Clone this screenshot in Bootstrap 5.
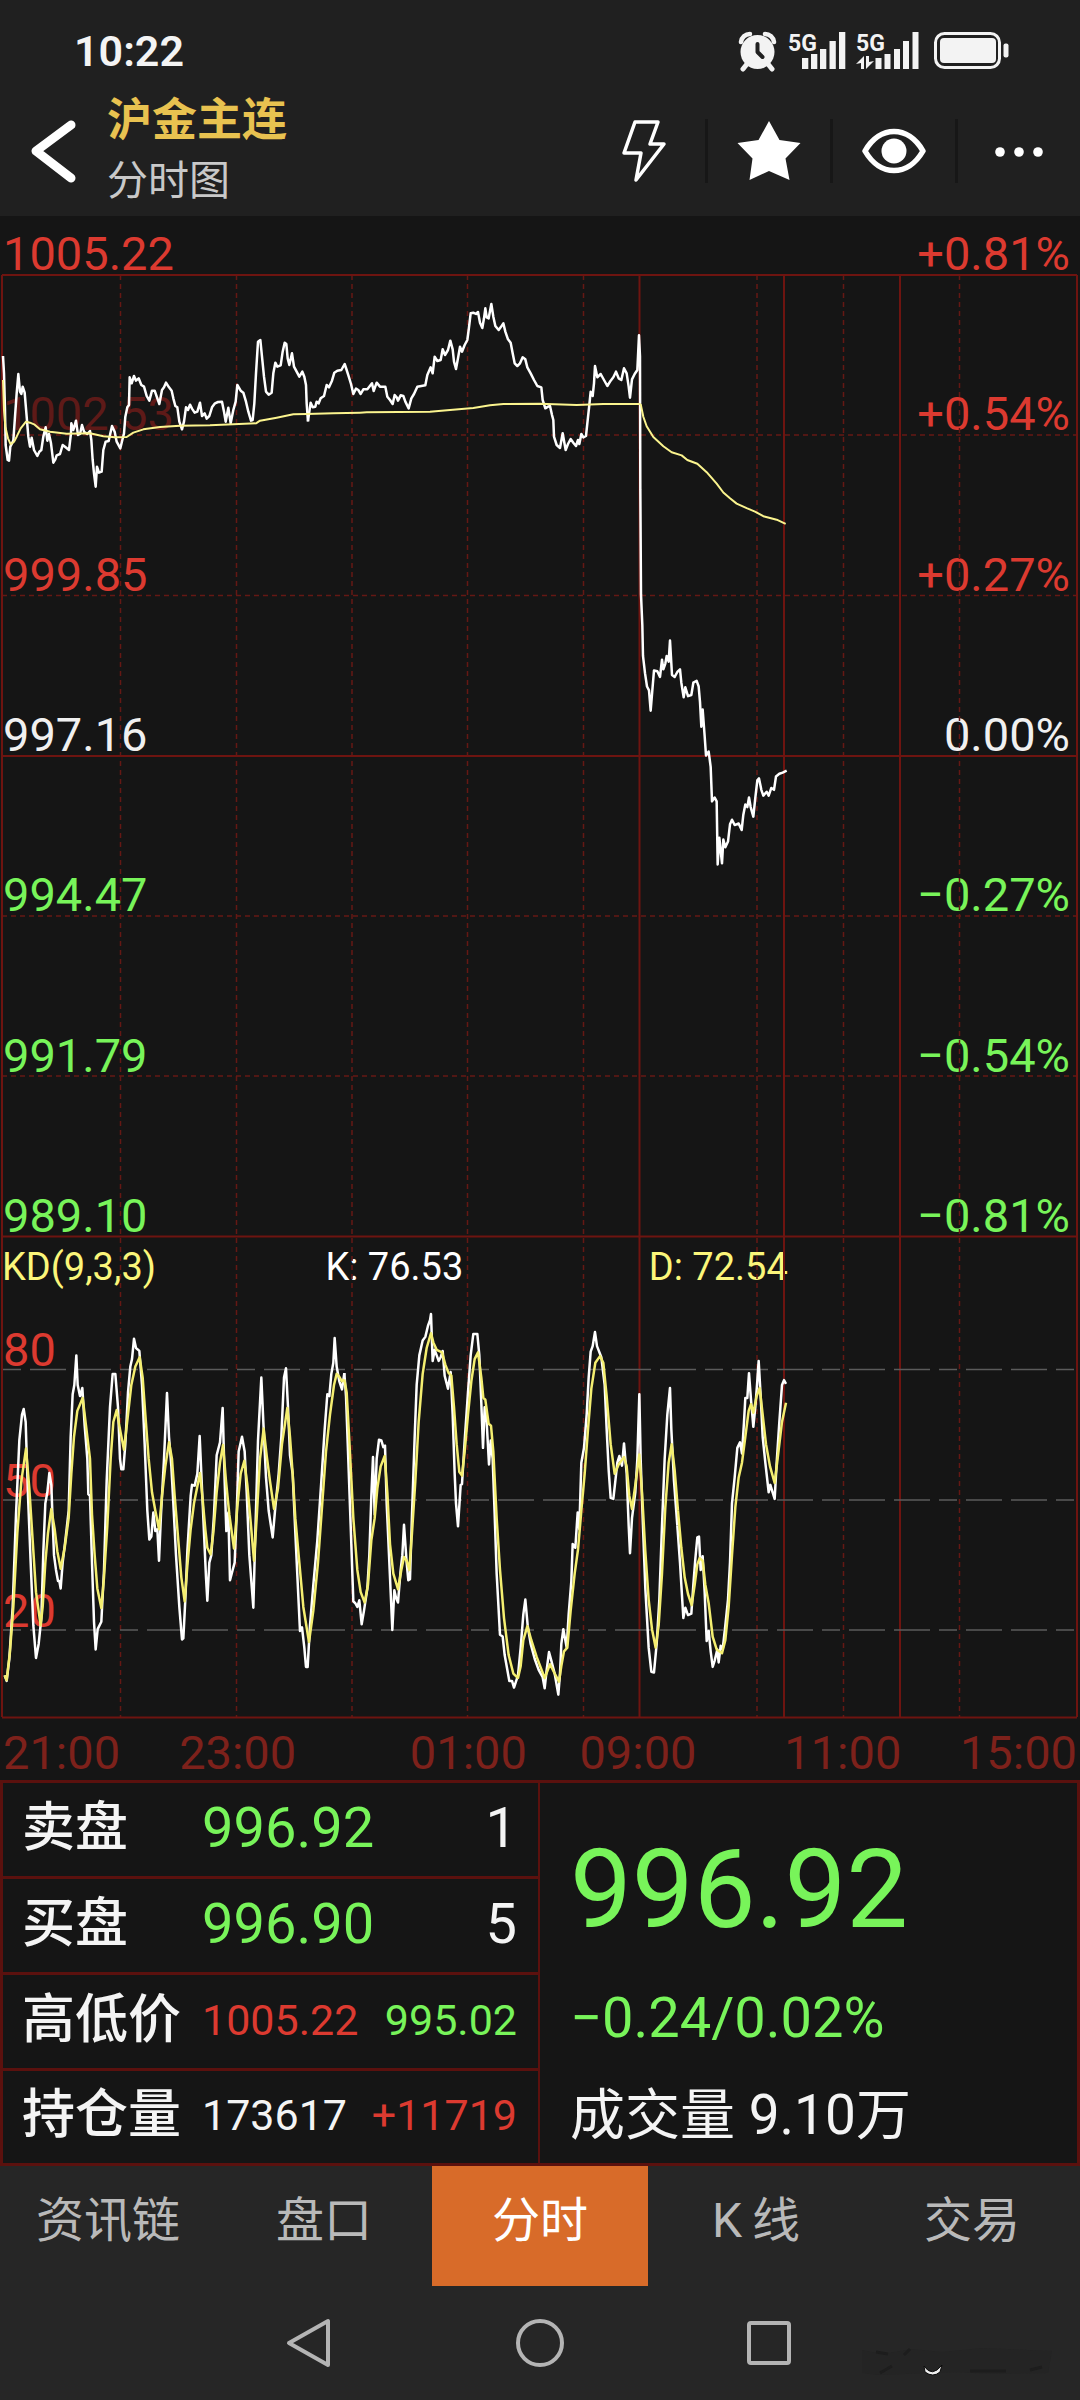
<!DOCTYPE html>
<html lang="zh-CN">
<head>
<meta charset="utf-8">
<meta name="viewport" content="width=device-width, initial-scale=1">
<title>沪金主连 分时图</title>
<link href="https://cdn.jsdelivr.net/npm/bootstrap@5.3.0/dist/css/bootstrap.min.css" rel="stylesheet">
<style>
  body { font-family: Roboto, "Noto Sans CJK SC", sans-serif; background: #262626; color: #f4f4f4; }
  .up { color: #dc3a30; }
  .down { color: #78f45a; }
  .flat { color: #f0f0f0; }
  .top-area { background: #202020; }
  .status-row { height: 86px; padding: 27px 70px 11px 74px; }
  .clock { font-size: 43px; line-height: 48px; font-weight: 600; }
  .app-row { height: 130px; }
  .back-btn { width: 107px; height: 96px; }
  .title-main { font-size: 45px; line-height: 60px; font-weight: 700; color: #e8c250; }
  .title-sub { font-size: 41px; line-height: 60px; color: #c9c9c9; }
  .tool-btn { width: 125px; height: 64px; border-radius: 0; border: 0; border-left: 3px solid #171717; }
  .tool-btn:first-child { border-left-color: transparent; }
  .chart-area { background: #151515; }
  .plot { pointer-events: none; }
  .price-axis { height: 1025px; padding: 14px 10px 1px 3px; }
  .axis-label { font-size: 47px; line-height: 48px; }
  .faded { color: #5e1a18; }
  .kd-head { font-size: 38px; line-height: 53px; height: 51px; padding-left: 2px; }
  .kd-head span { width: 30%; }
  .sun { color: #fbf67a; }
  .kd-axis { height: 426px; padding: 34px 0 83px 3px; }
  .time-axis { display: grid; grid-template-columns: 121fr 230fr 234fr 107fr 305fr 83fr; height: 62px; padding: 11px 3px 0; color: #7d211b; }
  .time-axis div { min-width: 0; display: flex; justify-content: center; }
  .time-axis div:first-child { justify-content: flex-start; }
  .time-axis div:last-child { justify-content: flex-end; }
  .quote { background: #151515; border: 3px solid #5b110e; }
  .quote-left { border-right: 2px solid #5b110e; }
  .quote-row { height: 96px; padding: 0 21px 4px 19px; border-bottom: 3px solid #5b110e; }
  .quote-row:last-child { border-bottom: 0; height: 92px; }
  .quote-name { width: 180px; font-size: 53px; line-height: 60px; font-weight: 500; }
  .num-lg { font-size: 56px; line-height: 60px; }
  .num-sm { font-size: 43px; line-height: 60px; }
  .quote-right { padding: 41px 30px 18px; }
  .last-price { font-size: 110px; line-height: 132px; }
  .change { font-size: 56px; line-height: 60px; margin-bottom: 37px; }
  .volume { font-size: 55px; line-height: 60px; }
  .tabs .nav-link { height: 120px; border-radius: 0; padding: 0 0 10px; font-size: 48px; color: #b9b9b9; display: flex; align-items: center; justify-content: center; }
  .tabs .nav-link.active { background: #d86b29; color: #fff; }
  .sys-nav { height: 114px; }
  .sys-nav .btn { width: 60px; height: 60px; }
  .sys-nav .keys { gap: 170px; }
  .smudge { right: 10px; bottom: 16px; }
</style>
<script src="https://cdn.jsdelivr.net/npm/bootstrap@5.3.0/dist/js/bootstrap.bundle.min.js"></script>
</head>
<body>
<header class="top-area">
  <div class="status-row d-flex justify-content-between align-items-center">
    <div class="clock">10:22</div>
    <svg width="274" height="42" viewBox="736 30 274 42" fill="#f3f3f3" aria-hidden="true">
      <!-- alarm -->
      <circle cx="757.500" cy="52" r="17"/>
      <path d="M741 42a9 9 0 0 1 9-8M774 42a9 9 0 0 0-9-8" fill="none" stroke="#f3f3f3" stroke-width="4.500" stroke-linecap="round"/>
      <path d="M747 64l-4 5M768 64l4 5" stroke="#f3f3f3" stroke-width="5" stroke-linecap="round"/>
      <path d="M757.500 44v8l5 5" fill="none" stroke="#202020" stroke-width="4" stroke-linecap="round" stroke-linejoin="round"/>
      <!-- signals -->
      <text x="788" y="51" font-size="23" font-weight="700" font-family="Roboto, sans-serif">5G</text>
      <path d="M802 58h6.300v11h-6.300zM811 54h6.300v15h-6.300zM820 49h6.300v20h-6.300zM829.500 41h6.300v28h-6.300zM839 32h6.300v37h-6.300z"/>
      <text x="856" y="51" font-size="23" font-weight="700" font-family="Roboto, sans-serif">5G</text>
      <path d="M856 64l8-8v13h-3v-6zM874 61l-8 8v-13h3v6z"/>
      <path d="M875.500 58h6v11h-6zM884.500 54h6v15h-6zM894 49h6v20h-6zM903 41h6v28h-6zM912.500 32h6v37h-6z"/>
      <!-- battery -->
      <rect x="935.500" y="33.500" width="64" height="34" rx="9" fill="none" stroke="#f3f3f3" stroke-width="3"/>
      <rect x="940" y="38" width="56" height="25" rx="4"/>
      <rect x="1003.500" y="43.500" width="5" height="14" rx="2"/>
    </svg>
  </div>
  <div class="app-row d-flex align-items-center">
    <button class="btn back-btn p-0 border-0 flex-shrink-0 text-start" aria-label="返回">
      <svg width="107" height="96" viewBox="0 0 107 96" fill="none" stroke="#fff" stroke-width="9" stroke-linecap="round" stroke-linejoin="round"><path d="M71 22L36 48l35 27"/></svg>
    </button>
    <div class="flex-grow-1">
      <div class="title-main">沪金主连</div>
      <div class="title-sub">分时图</div>
    </div>
    <div class="d-flex">
      <button class="btn tool-btn p-0" aria-label="闪电下单"><svg width="44" height="64" viewBox="0 0 44 64" fill="none" stroke="#fff" stroke-width="3.500" stroke-linejoin="round"><path d="M13 3h23l-8 22h14L14 61l5-27H2z"/></svg></button>
      <button class="btn tool-btn p-0" aria-label="自选"><svg width="64" height="62" viewBox="0 0 64 62" fill="#fff"><path d="M32 1l10.500 19 21 3-15 15.500 4 21.500L32 51 12.500 60l3-21.500L.5 23l21-3z"/></svg></button>
      <button class="btn tool-btn p-0" aria-label="查看"><svg width="64" height="46" viewBox="0 0 64 46" fill="none" stroke="#fff" stroke-width="5.500" stroke-linejoin="round"><path d="M3 23C18-3 46-3 61 23C46 49 18 49 3 23z"/><circle cx="32" cy="23" r="12.500" fill="#fff" stroke="none"/></svg></button>
      <button class="btn tool-btn p-0" aria-label="更多"><svg width="50" height="12" viewBox="0 0 50 12" fill="#fff"><circle cx="6" cy="6" r="4.800"/><circle cx="25" cy="6" r="4.800"/><circle cx="44" cy="6" r="4.800"/></svg></button>
    </div>
  </div>
</header>

<main>
  <section class="chart-area position-relative">
    <div class="price-axis axis-label d-flex flex-column justify-content-between">
      <div class="d-flex justify-content-between up"><span>1005.22</span><span>+0.81%</span></div>
      <div class="d-flex justify-content-between up"><span class="faded">1002.53</span><span>+0.54%</span></div>
      <div class="d-flex justify-content-between up"><span>999.85</span><span>+0.27%</span></div>
      <div class="d-flex justify-content-between flat"><span>997.16</span><span>0.00%</span></div>
      <div class="d-flex justify-content-between down"><span>994.47</span><span>−0.27%</span></div>
      <div class="d-flex justify-content-between down"><span>991.79</span><span>−0.54%</span></div>
      <div class="d-flex justify-content-between down"><span>989.10</span><span>−0.81%</span></div>
    </div>
    <div class="kd-head d-flex"><span class="sun">KD(9,3,3)</span><span class="text-white">K: 76.53</span><span class="sun">D: 72.54</span></div>
    <div class="kd-axis axis-label up d-flex flex-column justify-content-between"><div>80</div><div>50</div><div>20</div></div>
    <div class="time-axis axis-label"><div>21:00</div><div>23:00</div><div>01:00</div><div>09:00</div><div>11:00</div><div>15:00</div></div>

    <svg class="plot position-absolute top-0 start-0 w-100 h-100" viewBox="0 0 1080 1564" preserveAspectRatio="none" fill="none" aria-hidden="true">
      <!-- grid -->
      <g stroke="#651814" stroke-width="1.500" stroke-dasharray="5 4">
        <path d="M2 219H1077M2 379.500H1077M2 700H1077M2 860H1077"/>
        <path d="M120.500 59V1501M236.500 59V1501M352 59V1501M467.500 59V1501M583.500 59V1501M757 59V1501M843.500 59V1501M959.500 59V1501"/>
      </g>
      <g stroke="#6e1410" stroke-width="2">
        <path d="M2 59H1077M2 540H1077M2 1020.500H1077M2 1501.500H1077"/>
        <path d="M2 59V1501M639.500 59V1501M784 59V1501M900 59V1501M1077 59V1501"/>
      </g>
      <path d="M3 1153.500H1077M3 1284H1077M3 1414H1077" stroke="#5b5b5b" stroke-width="1.500" stroke-dasharray="18 9 36 9 36 9"/>
      <!-- K and D -->
      <g stroke="#fff" stroke-width="2.500" stroke-linejoin="round">
        <path vector-effect="non-scaling-stroke" transform="translate(0 984) scale(.33333 .36995)" d="M14,1285 20,1300 28,1240 38,1100 48,850 58,650 66,580 71,565 77,600 84,800 92,980 100,1150 108,1238 116,1200 124,1130 130,950 136,820 142,790 148,738 154,770 158,870 162,960 168,1000 174,1030 178,1030 182,1050 188,980 196,920 206,840 212,640 218,525 223,500 229,420 233,500 240,530 247,508 254,610 262,700 265,795 270,800 276,980 282,1140 287,1215 293,1160 304,1140 312,1000 320,760 330,560 338,470 346,470 354,560 360,700 364,728 370,728 376,660 384,520 391,450 396,430 402,375 408,400 418,408 426,500 434,660 442,840 448,918 454,910 460,845 466,895 472,890 477,975 483,850 492,700 501,522 507,640 514,720 520,820 528,960 538,1100 546,1188 550,1185 556,1080 562,950 572,800 576,770 584,772 592,740 599,638 605,760 612,900 618,1020 622,1083 628,980 634,960 642,850 650,690 660,655 668,562 674,760 679,895 685,845 690,1028 698,1000 704,980 710,850 716,680 726,640 734,680 740,790 748,960 760,1102 766,900 774,650 784,480 790,600 798,750 806,840 818,912 826,830 836,740 844,640 852,480 858,455 864,560 870,690 878,740 886,900 896,1090 900,1165 906,1155 913,1210 918,1262 923,1262 930,1150 940,1040 952,920 964,760 974,620 982,525 988,530 994,470 1000,440 1004,373 1010,450 1018,490 1026,512 1033,468"/>
        <path vector-effect="non-scaling-stroke" transform="translate(340 984) scale(.33333 .36995)" d="M13,468 18,530 24,680 32,880 40,1085 46,1090 52,1100 58,1082 65,1147 72,1110 82,1050 88,960 94,800 99,695 104,850 110,700 117,648 124,650 130,668 135,664 140,820 148,980 157,1162 163,1055 168,1075 174,1088 182,1000 187,960 192,878 200,980 205,1028 210,1025 216,850 224,640 230,500 238,420 248,380 256,370 264,340 270,325 273,308 278,435 284,405 296,435 302,425 308,408 314,475 324,510 332,465 338,580 344,740 348,820 354,882 362,770 366,768 374,650 384,520 392,420 400,362 412,362 418,420 424,550 429,670 434,560 440,600 447,715 452,650 458,700 464,850 470,1010 480,1175 488,1180 494,1230 508,1300 516,1300 522,1318 534,1285 542,1210 550,1120 556,1080 563,1150 572,1200 584,1240 596,1270 608,1290 614,1320 620,1270 627,1222 634,1245 644,1280 655,1337 660,1280 664,1200 670,1160 680,1210 686,1120 694,1030 698,930 706,940 713,845 718,890 724,710 732,670 740,580 746,480 752,410 758,395 765,357 771,395 784,425 794,500 800,620 806,730 812,805 820,808 826,760 832,710 838,692 846,718 852,658 860,740 866,880 870,955 876,860 886,790 892,700 898,525 902,700 908,860 916,1050 926,1210 934,1275 942,1277 950,1200 958,1080 966,880 974,700 982,580 990,508 994,620 1002,760 1012,880"/>
        <path vector-effect="non-scaling-stroke" transform="translate(600 984) scale(.33333 .36995)" d="M232,880 240,980 246,1070 250,1130 256,1102 264,1122 274,1118 280,1040 286,970 292,912 297,910 302,1000 308,963 314,1060 320,1192 326,1165 332,1220 338,1262 344,1245 352,1215 356,1250 362,1205 368,1215 376,1150 384,1080 390,980 396,820 404,750 412,670 420,655 426,685 432,600 436,535 442,535 447,468 453,540 460,613 466,560 471,500 476,435 482,530 488,640 496,710 506,790 511,770 516,785 524,808 530,710 538,600 546,500 552,487 558,497"/>
      </g>
      <g stroke="#f4ee70" stroke-width="2.500" stroke-linejoin="round">
        <path vector-effect="non-scaling-stroke" transform="translate(0 984) scale(.33333 .36995)" d="M14,1285 20,1298 30,1220 40,1100 52,900 64,760 78,672 88,780 98,920 108,1060 122,1150 128,1100 136,980 144,900 154,835 164,890 172,950 182,997 194,940 206,860 214,740 222,640 232,570 248,535 258,610 270,700 276,850 284,960 292,1050 304,1103 312,1020 322,880 332,700 340,600 350,568 360,620 372,675 384,580 394,500 406,450 419,425 428,480 436,580 446,700 456,790 466,840 477,890 486,800 496,720 507,655 516,700 524,800 534,910 544,1020 554,1085 562,990 572,890 582,820 600,738 608,810 616,890 622,940 632,958 640,900 650,790 660,710 669,662 678,760 688,850 702,942 712,830 722,740 733,705 742,770 752,870 762,975 770,860 780,700 791,618 800,690 810,760 822,835 834,780 846,660 862,562 870,640 878,740 886,860 898,980 910,1100 927,1195 940,1110 954,980 966,830 978,680 990,580 1002,500 1010,470 1018,478 1026,490 1033,485"/>
        <path vector-effect="non-scaling-stroke" transform="translate(340 984) scale(.33333 .36995)" d="M13,485 20,520 28,650 40,860 52,1000 62,1060 74,1088 84,1040 94,920 104,860 112,780 122,720 134,692 142,790 150,930 160,1010 174,1052 184,1000 192,965 200,975 208,1000 216,900 226,760 236,600 248,470 260,400 273,360 280,385 290,405 306,412 316,445 326,468 334,475 342,560 350,660 358,735 366,745 374,680 384,580 394,490 404,430 414,412 424,480 430,535 436,540 446,605 453,610 460,680 470,860 480,1000 492,1130 506,1230 520,1280 534,1292 542,1260 550,1190 562,1152 574,1190 590,1235 614,1292 630,1255 644,1280 657,1302 664,1260 672,1220 682,1210 692,1110 704,1010 714,945 724,840 734,740 744,620 754,510 766,440 780,422 790,440 800,530 812,660 824,740 836,715 852,695 860,720 868,800 876,835 886,770 898,688 906,790 916,950 926,1080 936,1160 947,1210 956,1150 966,1010 976,830 986,710 995,660 1004,730 1014,840"/>
        <path vector-effect="non-scaling-stroke" transform="translate(600 984) scale(.33333 .36995)" d="M234,840 244,940 254,1020 264,1065 275,1095 284,1040 292,985 299,968 308,975 316,1040 326,1090 338,1180 350,1215 366,1225 376,1190 386,1100 396,960 406,830 416,750 426,710 436,640 446,570 453,552 460,575 470,530 479,508 488,580 498,660 510,720 524,765 534,690 546,600 558,548"/>
      </g>
      <!-- price -->
      <g stroke="#fff" stroke-width="2.500" stroke-linejoin="round">
        <path vector-effect="non-scaling-stroke" transform="translate(0 54) scale(.33333)" d="M9,258 12,310 15,420 17,525 23,570 27,572 31,530 40,512 45,440 50,370 55,312 60,365 64,372 68,350 74,368 80,440 85,500 90,530 95,503 102,540 112,558 118,545 124,540 130,500 137,472 142,512 147,492 153,520 160,578 166,568 170,556 180,552 188,525 195,530 207,540 213,490 214,460 220,480 228,452 234,495 240,492 246,465 252,485 262,492 270,483 274,510 278,570 282,610 287,650 291,590 297,608 305,605 310,540 317,515 326,513 336,468 344,485 350,515 361,535 367,510 372,490 376,440 382,412 387,405 389,322 395,340 402,318 408,332 416,325 424,345 432,350 440,378 448,392 456,362 464,362 472,385 478,402 486,360 492,352 498,338 507,352 515,362 520,385 526,408 532,412 538,455 546,478 552,455 558,412 564,420 570,404 576,416 584,428 592,425 600,398 606,438 614,430 620,446 628,438 636,412 645,400 654,396 666,395 672,425 677,455 685,413 692,460 700,420 707,395 712,345 722,362 730,368 738,395 745,425 753,452 758,450 763,400 768,310 774,215 781,210 786,260 792,320 798,365 806,374 815,368 820,310 826,278 832,290 842,286 848,245 854,218 859,222 863,265 868,285 876,250 882,290 890,305 898,320 907,305 913,320 918,345 920,400 924,455"/>
        <path vector-effect="non-scaling-stroke" transform="translate(230 74) scale(.33333)" d="M234,393 238,365 242,338 248,352 256,350 260,335 266,340 272,325 282,318 290,285 297,292 306,272 313,248 322,242 334,240 344,222 350,240 357,262 363,282 370,312 378,296 385,300 392,312 400,298 412,298 426,280 431,303 440,278 450,290 466,290 472,320 480,330 488,342 494,315 500,322 504,332 512,316 520,318 526,335 536,355 544,325 552,312 562,290 574,288 586,286 592,255 602,232 608,250 614,200 622,213 632,210 638,178 645,195 654,180 661,152 668,178 672,215 678,237 684,205 690,170 696,185 704,165 712,150 716,120 722,70 730,68 738,72 744,66 750,98 757,114 762,85 766,55 770,82 776,85 784,42 790,80 796,108 806,120 812,112 820,100 826,125 834,148 842,158 848,190 854,220 862,228 870,220 878,202 886,208 892,232 902,250 912,270 922,288 934,292 938,330 946,355 954,350 960,348 966,375 970,390 972,440 980,465 990,474 998,430 1007,480 1014,462 1022,447 1030,458 1038,468 1044,450 1048,462 1054,432 1060,442 1068,438 1072,400 1078,345 1082,305 1088,318 1092,280 1095,228 1102,262 1112,252 1122,270 1132,288 1142,272 1150,262 1158,245 1166,265 1174,270 1182,235 1190,250 1196,290 1200,323 1206,268 1214,252 1222,240 1227,136 1230,200 1231,600"/>
        <path vector-effect="non-scaling-stroke" transform="translate(600 84) scale(.33333 .38270)" d="M121,496 123,770 127,850 129,930 135,975 141,1010 147,1020 152,1073 157,1020 162,968 172,970 180,985 186,940 190,965 196,950 200,930 206,945 210,890 216,980 224,985 232,972 240,965 244,1000 251,1038 256,1012 264,1035 274,1032 280,1000 290,995 296,1010 300,1050 304,1115 308,1070 314,1140 318,1190 326,1180 332,1220 336,1310 344,1300 350,1310 353,1475 358,1405 366,1472 370,1410 376,1430 384,1415 390,1370 396,1358 404,1372 416,1368 425,1385 430,1345 436,1318 442,1325 447,1300 452,1325 460,1350 466,1300 472,1255 477,1250 484,1280 490,1295 500,1285 506,1295 514,1275 522,1280 528,1245 538,1238 548,1235 560,1230"/>
      </g>
      <!-- average -->
      <g stroke="#fbf48e" stroke-width="2" stroke-linejoin="round">
        <path vector-effect="non-scaling-stroke" transform="translate(0 54) scale(.33333)" d="M9,330 12,420 16,470 24,505 32,523 42,515 50,500 62,475 78,455 90,458 104,464 120,478 150,485 200,491 270,490 310,499 345,502 380,501 400,488 430,478 480,471 540,467 630,466 700,463 768,460 780,452 830,443 880,433 920,432 1000,430 1080,428"/>
        <path vector-effect="non-scaling-stroke" transform="translate(230 74) scale(.33333)" d="M390,368 410,367 600,365 660,360 730,354 780,346 820,342 930,341 1040,345 1120,342 1232,342"/>
        <path vector-effect="non-scaling-stroke" transform="translate(600 84) scale(.33333 .38270)" d="M122,272 130,305 140,330 160,358 190,382 215,398 245,406 262,418 292,428 320,450 350,480 370,503 390,518 410,532 440,544 465,553 490,565 530,574 557,585"/>
      </g>
    </svg>
  </section>

  <section class="quote d-flex">
    <div class="quote-left w-50">
      <div class="quote-row d-flex align-items-center"><span class="quote-name">卖盘</span><span class="num-lg down">996.92</span><span class="num-lg ms-auto">1</span></div>
      <div class="quote-row d-flex align-items-center"><span class="quote-name">买盘</span><span class="num-lg down">996.90</span><span class="num-lg ms-auto">5</span></div>
      <div class="quote-row d-flex align-items-center"><span class="quote-name">高低价</span><span class="num-sm up">1005.22</span><span class="num-sm down ms-auto">995.02</span></div>
      <div class="quote-row d-flex align-items-center"><span class="quote-name">持仓量</span><span class="num-sm">173617</span><span class="num-sm up ms-auto">+11719</span></div>
    </div>
    <div class="quote-right w-50 d-flex flex-column">
      <div class="last-price down">996.92</div>
      <div class="mt-auto change down">−0.24/0.02%</div>
      <div class="volume">成交量 9.10万</div>
    </div>
  </section>
</main>

<nav class="tabs nav nav-pills nav-fill row-cols-5">
  <a class="nav-link" href="#">资讯链</a>
  <a class="nav-link" href="#">盘口</a>
  <a class="nav-link active" aria-current="page" href="#">分时</a>
  <a class="nav-link" href="#">K&thinsp;线</a>
  <a class="nav-link" href="#">交易</a>
</nav>

<footer class="sys-nav position-relative d-flex align-items-center justify-content-center">
  <div class="keys d-flex">
    <button class="btn p-0 border-0" aria-label="后退"><svg width="60" height="60" viewBox="0 0 60 60" fill="none" stroke="#b4b4b4" stroke-width="4" stroke-linejoin="round"><path d="M48 8v44L9 30z"/></svg></button>
    <button class="btn p-0 border-0" aria-label="主屏幕"><svg width="60" height="60" viewBox="0 0 60 60" fill="none" stroke="#b4b4b4" stroke-width="4"><circle cx="30" cy="30" r="22"/></svg></button>
    <button class="btn p-0 border-0" aria-label="最近任务"><svg width="60" height="60" viewBox="0 0 60 60" fill="none" stroke="#b4b4b4" stroke-width="4" stroke-linejoin="round"><rect x="9" y="10" width="40" height="40" rx="2"/></svg></button>
  </div>
  <svg class="smudge position-absolute" width="220" height="44" viewBox="0 0 220 44" aria-hidden="true">
    <path d="M12 10l20 4 30-5 30 3 40-4 70 3-4 22-60 1-30-2-80 3-16-2z" fill="#212121" opacity=".5"/>
    <path d="M26 12l12 2M60 9l-6 6M42 26l-12 7M120 31h36M180 30l12-3" stroke="#1d1d1d" stroke-width="3"/>
    <path d="M74 26q8 12 18-1l-2 7q-7 6-15 0z" fill="#eee" stroke="#0c0c0c" stroke-width="1"/>
  </svg>
</footer>
</body>
</html>
